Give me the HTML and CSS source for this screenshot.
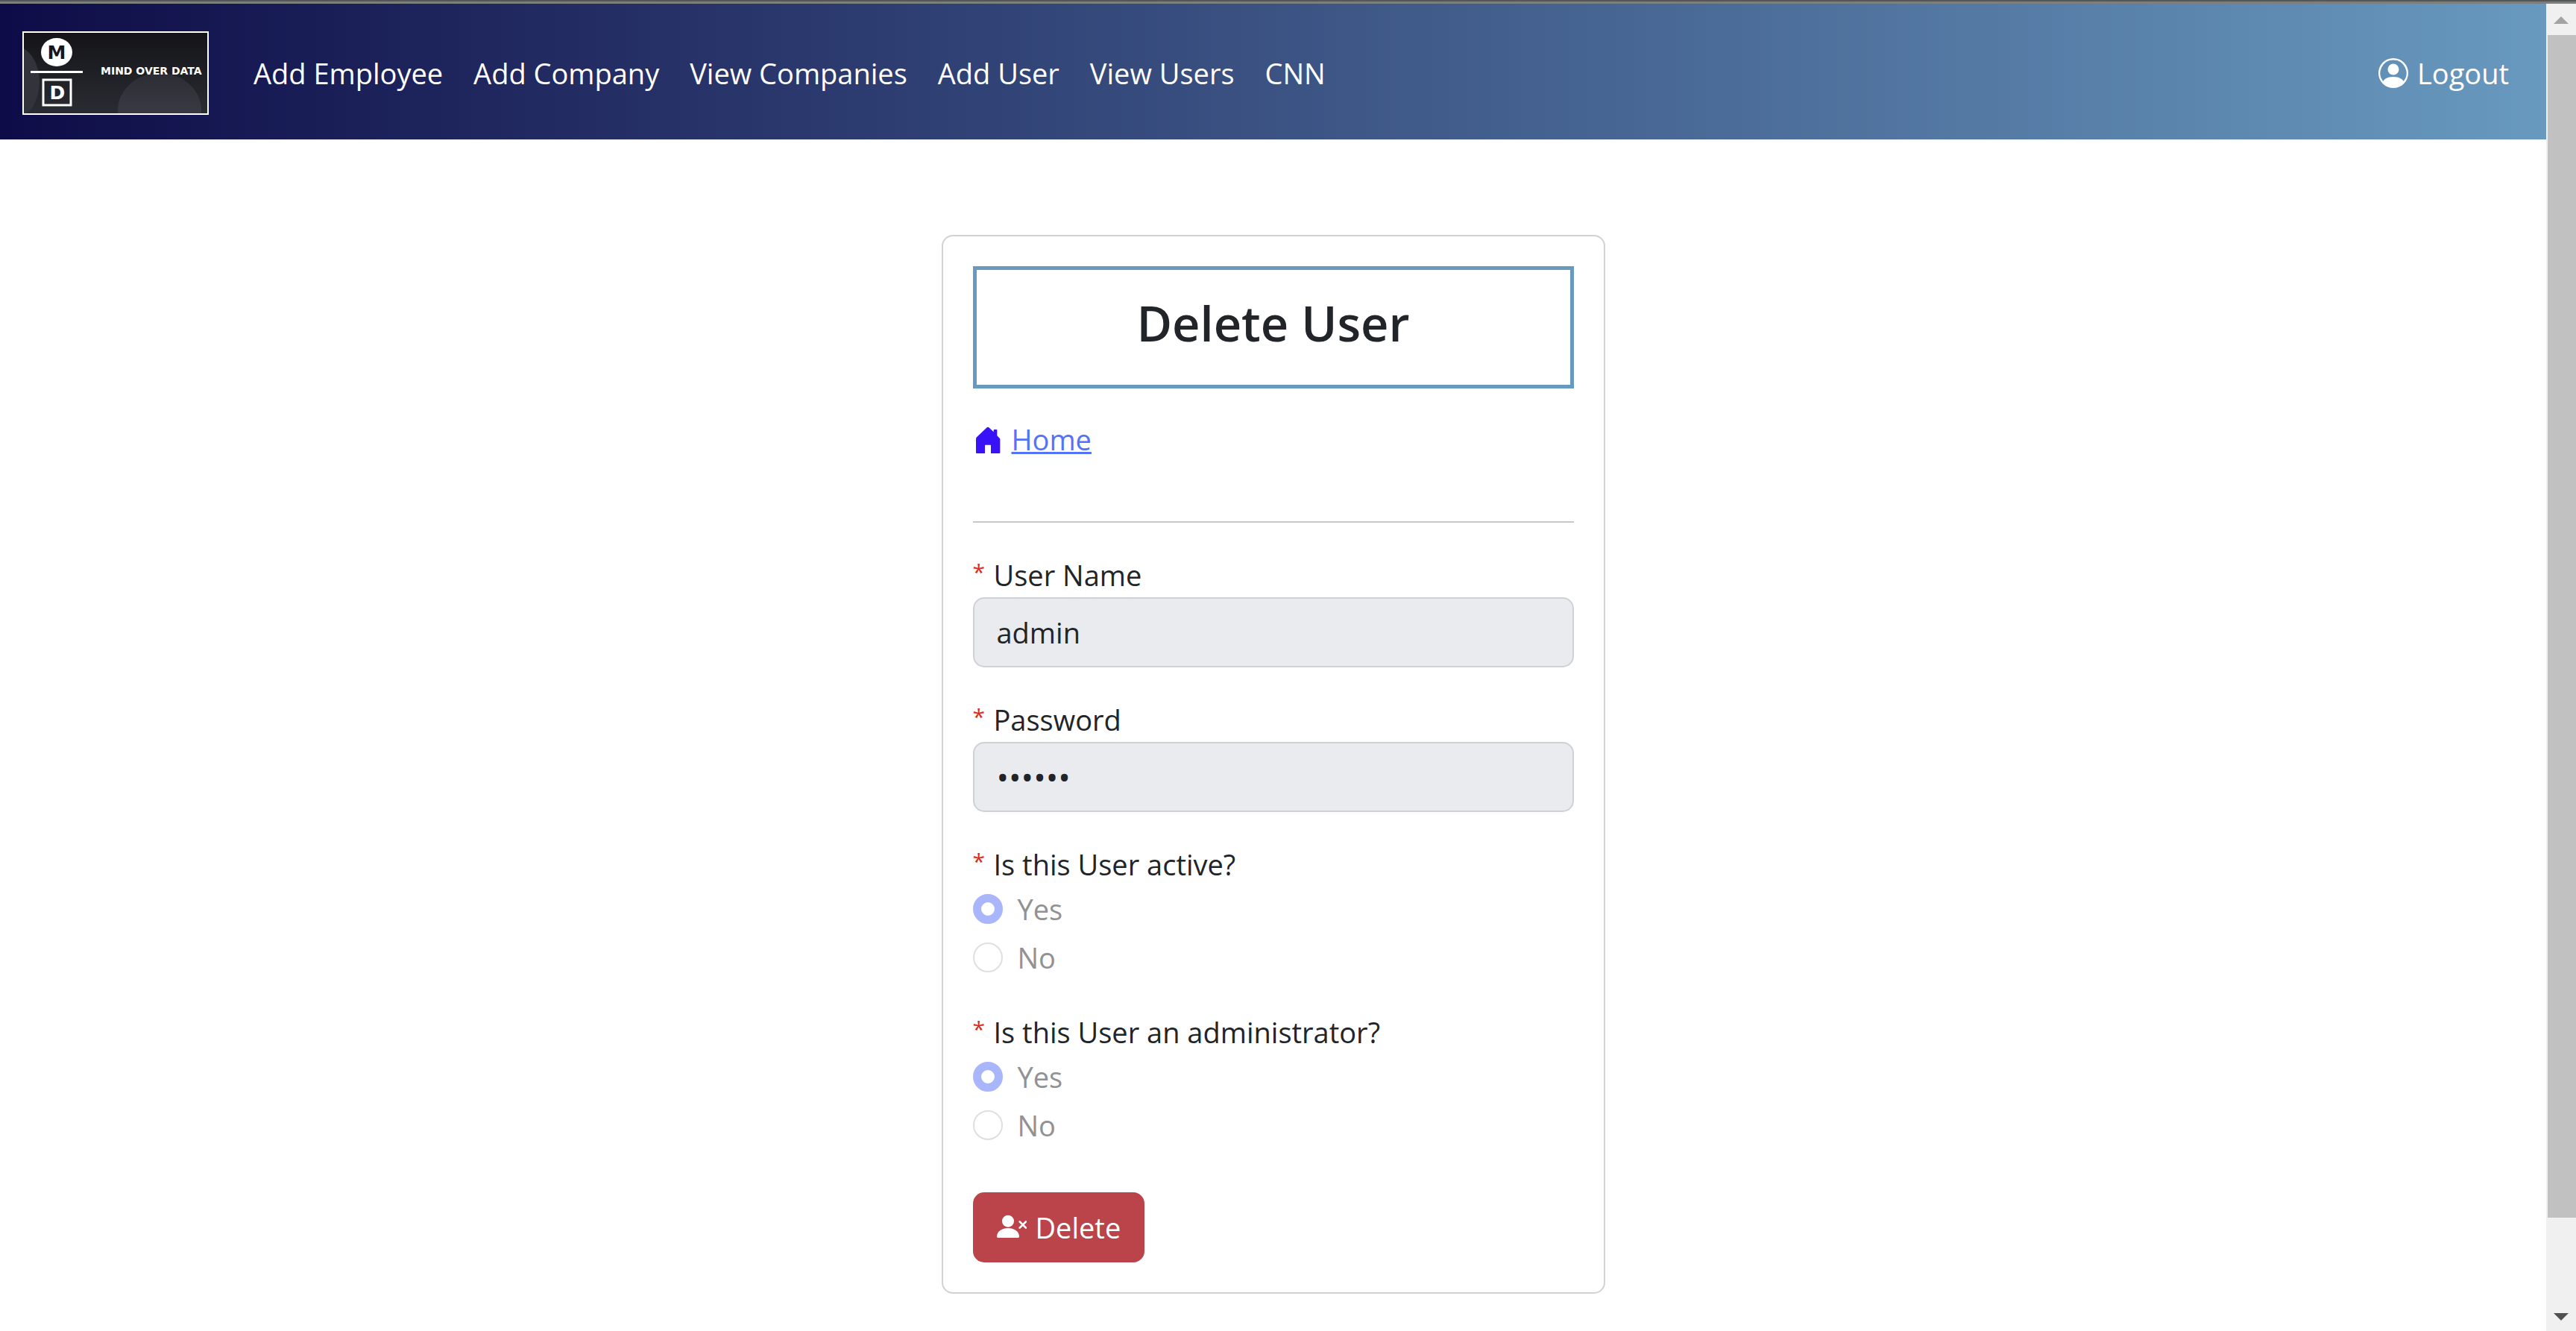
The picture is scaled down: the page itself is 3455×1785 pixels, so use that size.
FILE: index.html
```html
<!DOCTYPE html>
<html lang="en">
<head>
<meta charset="utf-8">
<title>Delete User</title>
<link rel="stylesheet" href="styles.css">
</head>
<body>
<div class="window">
  <div class="page">
    <header class="navbar">
      <a class="brand" href="#" aria-label="Mind Over Data">
        <svg class="brand-logo" viewBox="0 0 246 108">
          <defs>
            <linearGradient id="plate" x1="0" y1="0" x2="0" y2="1">
              <stop offset="0" stop-color="#141418"/>
              <stop offset="1" stop-color="#2a2c33"/>
            </linearGradient>
            <linearGradient id="glow" x1="0" y1="0" x2="0" y2="1">
              <stop offset="0" stop-color="#2c2d34"/>
              <stop offset="1" stop-color="#43444e"/>
            </linearGradient>
          </defs>
          <rect width="246" height="108" fill="url(#plate)"/>
          <ellipse cx="-12" cy="66" rx="33" ry="48" fill="#33343b"/>
          <ellipse cx="182" cy="104" rx="56" ry="50" fill="url(#glow)"/>
          <ellipse cx="44" cy="26" rx="21" ry="19" fill="#fff"/>
          <text class="logo-letter" x="44" y="35" fill="#17171b">M</text>
          <rect x="9" y="51" width="70" height="3" fill="#fff"/>
          <rect x="26" y="63" width="37" height="34" fill="none" stroke="#fff" stroke-width="3"/>
          <text class="logo-letter" x="45" y="89" fill="#fff">D</text>
          <text class="logo-name" x="103" y="56" fill="#fff">MIND OVER DATA</text>
        </svg>
      </a>
      <nav class="nav-links">
        <a href="#">Add Employee</a>
        <a href="#">Add Company</a>
        <a href="#">View Companies</a>
        <a href="#">Add User</a>
        <a href="#">View Users</a>
        <a href="#">CNN</a>
      </nav>
      <a class="logout" href="#">
        <svg class="icon" viewBox="0 0 16 16" fill="currentColor"><path d="M11 6a3 3 0 1 1-6 0 3 3 0 0 1 6 0"/><path fill-rule="evenodd" d="M0 8a8 8 0 1 1 16 0A8 8 0 0 1 0 8m8-7a7 7 0 0 0-5.468 11.37C3.242 11.226 4.805 10 8 10s4.757 1.225 5.468 2.37A7 7 0 0 0 8 1"/></svg>
        Logout
      </a>
    </header>

    <main class="card">
      <h1 class="card-title">Delete User</h1>
      <div class="home">
        <svg class="icon home-icon" viewBox="0 0 120 120" fill="currentColor"><path d="M12 59q0-4 3-7l41-39q4-3 8 0l19 18v-7q0-3 3-3h8q3 0 3 3v22l8 8q4 3 4 7v53q0 3-3 3H72V85q0-2-2-2H50q-2 0-2 2v32H15q-3 0-3-3z"/></svg>
        <a href="#">Home</a>
      </div>
      <hr class="divider">
      <form class="form">
        <div class="field">
          <label for="name"><span class="required">*</span>User Name</label>
          <input class="text-input" id="name" type="text" value="admin" disabled>
        </div>
        <div class="field">
          <label for="password"><span class="required">*</span>Password</label>
          <input class="text-input" id="password" type="password" value="secret" disabled>
        </div>
        <fieldset class="field">
          <legend><span class="required">*</span>Is this User active?</legend>
          <div class="options">
            <label class="option"><input type="radio" name="active" checked disabled>Yes</label>
            <label class="option"><input type="radio" name="active" disabled>No</label>
          </div>
        </fieldset>
        <fieldset class="field">
          <legend><span class="required">*</span>Is this User an administrator?</legend>
          <div class="options">
            <label class="option"><input type="radio" name="admin" checked disabled>Yes</label>
            <label class="option"><input type="radio" name="admin" disabled>No</label>
          </div>
        </fieldset>
        <button class="delete" type="button">
          <svg class="icon" viewBox="0 0 120 120" fill="currentColor"><circle cx="45" cy="35" r="24"/><path d="M0 97c0-22 22-34 45-34s45 12 45 34q0 5-5 5H5q-5 0-5-5z"/><path d="M92 37l25 25m0-25l-25 25" fill="none" stroke="currentColor" stroke-width="8" stroke-linecap="round"/></svg>
          Delete
        </button>
      </form>
    </main>
  </div>

  <div class="scrollbar" aria-hidden="true">
    <svg class="arrow arrow-up" viewBox="0 0 20 10"><path d="M10 0L20 10H0z"/></svg>
    <div class="thumb"></div>
    <svg class="arrow" viewBox="0 0 20 10"><path d="M0 0H20L10 10z"/></svg>
  </div>
</div>
</body>
</html>
```
FILE: styles.css
```css
* {
  box-sizing: border-box;
}

body {
  display: flex;
  height: 100vh;
  margin: 0;
  border-top: 2px solid #555757;
  background: #fff;
  color: #212529;
  font-family: "Open Sans", "Noto Sans", sans-serif;
  font-size: 38px;
  line-height: 60px;
}

.window {
  display: flex;
  flex: 1;
  min-width: 0;
  border-top: 3px solid #7b7f7e;
}

.page {
  flex: 1;
  min-width: 0;
  overflow: hidden;
}

/* Navigation */
.navbar {
  display: flex;
  align-items: center;
  padding: 37px 50px 33px 30px;
  background: linear-gradient(90deg, #0e0c48, #6899be);
}

.brand {
  display: block;
  border: 2px solid #fff;
}

.brand-logo {
  display: block;
  width: 246px;
  height: 108px;
}

.logo-letter {
  font: bold 25px "DejaVu Sans", sans-serif;
  text-anchor: middle;
}

.logo-name {
  font: bold 14px "DejaVu Sans", sans-serif;
}

.nav-links {
  display: flex;
  flex: 1;
  gap: 41px;
  margin-left: 60px;
}

.nav-links a,
.logout {
  color: #fff;
  text-decoration: none;
}

.logout,
.home,
.delete {
  display: flex;
  align-items: center;
}

.logout,
.home {
  gap: 12px;
}

.icon {
  width: 40px;
  height: 40px;
}

/* Card */
.card {
  width: 890px;
  max-width: 100%;
  margin: 128px auto 60px;
  padding: 40px;
  border: 2px solid #d2d2d2;
  border-radius: 15px;
}

.card-title {
  margin: 0 0 38px;
  padding: 29px 25px 41px;
  border: 5px solid #6899be;
  font-size: 65px;
  font-weight: 600;
  line-height: 84px;
  text-align: center;
}

.home-icon {
  color: #3a12f7;
}

.home a {
  color: #5273fa;
}

.divider {
  height: 2px;
  margin: 80px 0 40px;
  border: 0;
  background: #c8c8c8;
}

.form {
  display: flex;
  flex-direction: column;
  align-items: flex-start;
  gap: 40px;
}

.field {
  width: 100%;
  min-width: 0;
  margin: 0;
  padding: 0;
  border: 0;
}

.field > label,
legend {
  display: block;
  padding: 0;
}

.required {
  display: inline-block;
  width: 28px;
  color: #d92b20;
  font-size: 30px;
  line-height: 52px;
  vertical-align: top;
}

.text-input {
  display: block;
  width: 100%;
  height: 94px;
  padding: 15px 30px;
  border: 2px solid #ced1d6;
  border-radius: 15px;
  background: #e9ebef;
  color: #212529;
  font: inherit;
}

.text-input[type="password"] {
  font-size: 44px;
}

.options {
  display: flex;
  flex-direction: column;
  gap: 5px;
}

.option {
  display: flex;
  align-items: center;
  gap: 20px;
  color: #909294;
}

.option input {
  appearance: none;
  width: 40px;
  height: 40px;
  margin: 0;
  border: 2px solid #dfdfdf;
  border-radius: 50%;
  background: #fff;
}

.option input:checked {
  border: 11px solid #a9b6fb;
}

.delete {
  gap: 12px;
  height: 94px;
  margin-top: 20px;
  padding: 0 32px;
  border: 0;
  border-radius: 15px;
  background: #ba444a;
  color: #fff;
  font: inherit;
}

/* Scrollbar */
.scrollbar {
  display: flex;
  flex-direction: column;
  align-items: center;
  width: 40px;
  padding: 17px 0 14px;
  background: #f0f0f0;
}

.thumb {
  flex: 1;
  align-self: stretch;
  margin: 15px 0 128px 2px;
  background: #c1c1c1;
}

.arrow {
  width: 20px;
  height: 10px;
  fill: #505050;
}

.arrow-up {
  fill: #a3a3a3;
}
```
